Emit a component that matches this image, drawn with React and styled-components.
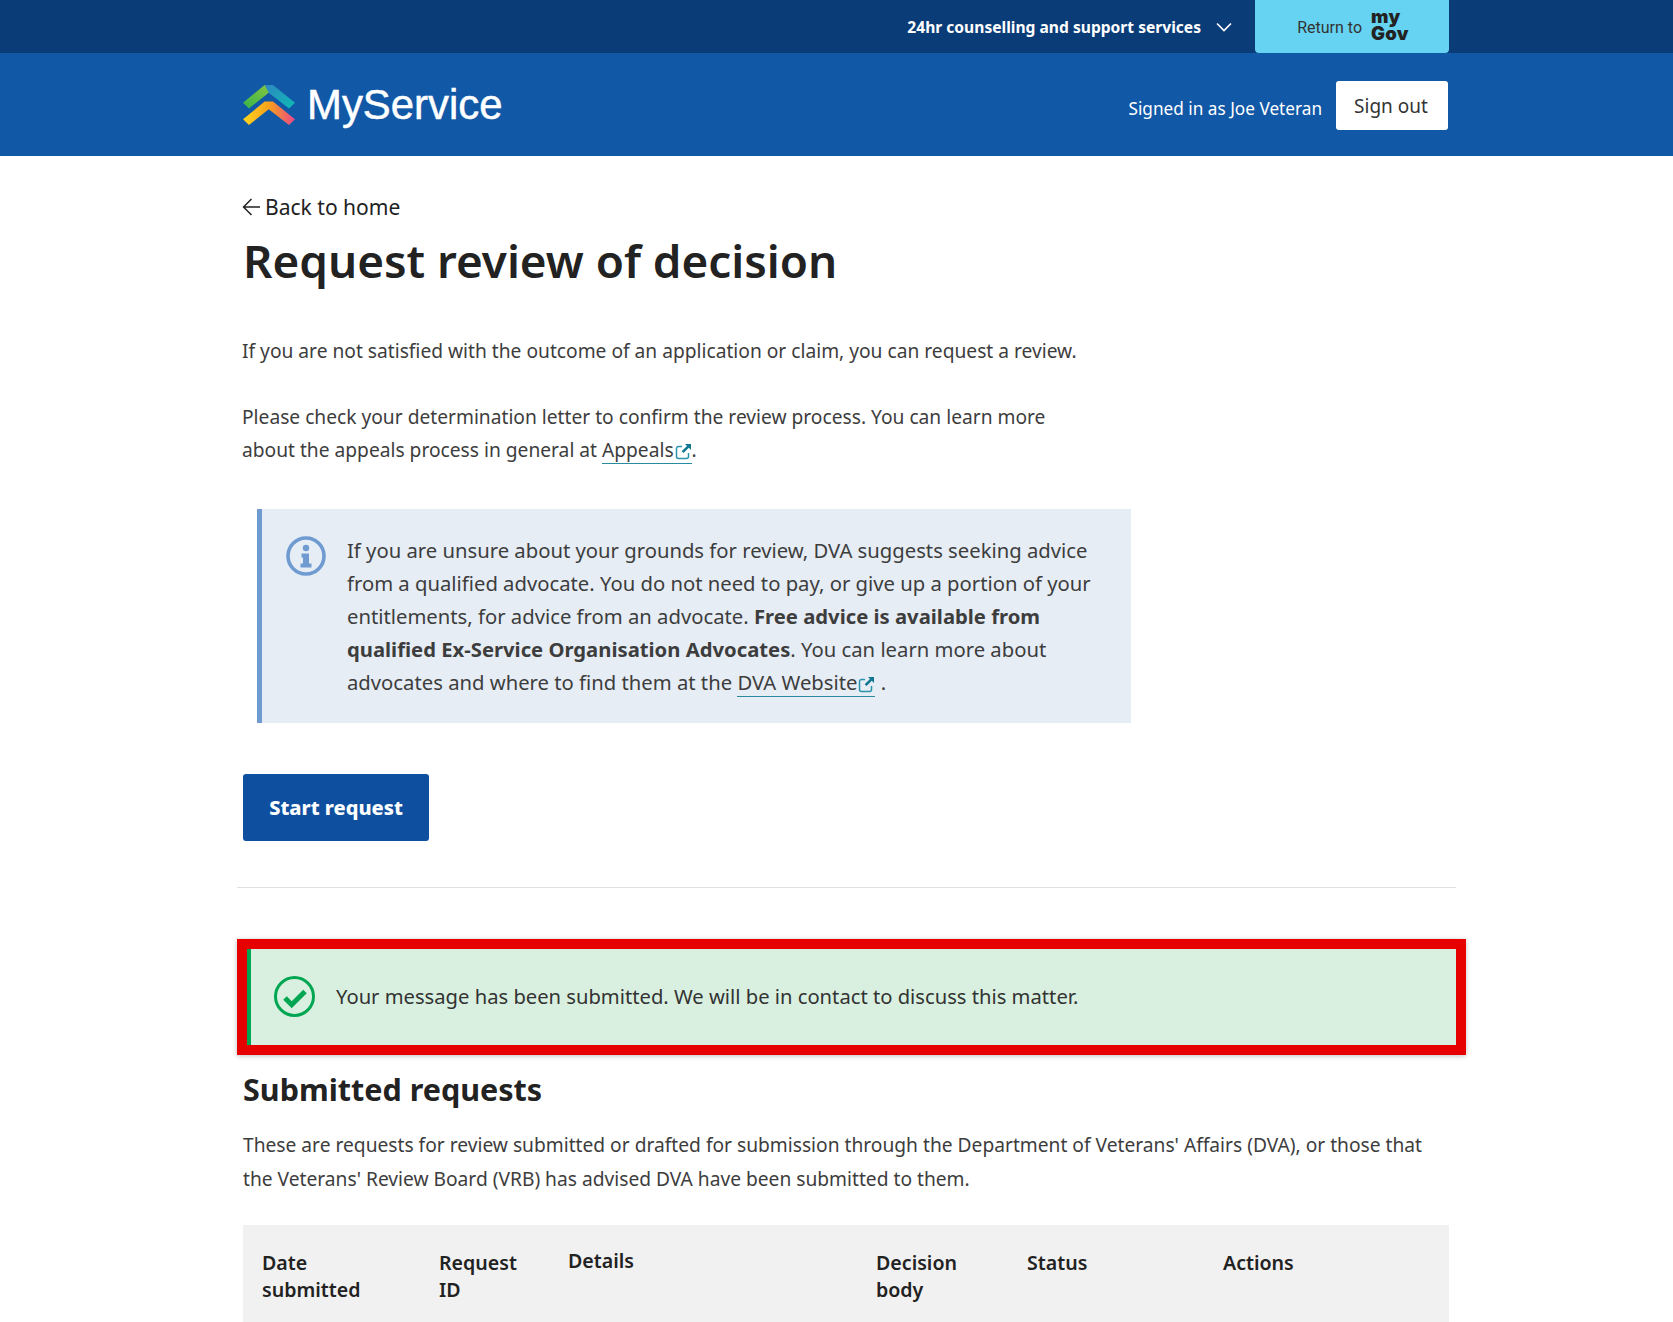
import React from 'react'
import styled, { createGlobalStyle } from 'styled-components'

const GlobalStyle = createGlobalStyle`
    html, body {
        margin: 0;
        padding: 0;
        background: #fff;
        overflow: hidden;
    }
    body {
        font-family: "Noto Sans", "Open Sans", sans-serif;
        color: #3d3d3d;
    }
`

const Inner = styled.div`
    width: 1206px;
    margin-left: 243px;
`

const TopBar = styled.div`
    height: 53px;
    background: #0a3c78;
`

const TopInner = styled(Inner)`
    height: 100%;
    display: flex;
    justify-content: flex-end;
    align-items: center;
`

const SupportLink = styled.a`
    display: flex;
    align-items: center;
    gap: 15px;
    margin-right: 23px;
    color: #fff;
    font-size: 15.6px;
    font-weight: 700;
`

const ReturnButton = styled.a`
    width: 194px;
    height: 53px;
    box-sizing: border-box;
    padding: 1px 0 0 2px;
    background: #65d3f1;
    border-radius: 0 0 4px 4px;
    display: flex;
    align-items: center;
    justify-content: center;
    gap: 9px;
    color: #333;
    font-family: Roboto, sans-serif;
    font-size: 16px;
`

const GovMark = styled.span`
    display: flex;
    flex-direction: column;
    margin-bottom: 4px;
    line-height: 17px;
    font-family: Inter, sans-serif;
    font-size: 18.5px;
    font-weight: 900;
    letter-spacing: 0.3px;
    color: #222;
`

const Header = styled.header`
    height: 103px;
    background: #1158a7;
`

const HeaderInner = styled(Inner)`
    height: 100%;
    display: flex;
    align-items: center;
    justify-content: space-between;
    color: #fff;
`

const Brand = styled.div`
    display: flex;
    align-items: center;
    gap: 12px;
    font-family: "Liberation Sans", Arial, sans-serif;
    font-size: 41.9px;
    -webkit-text-stroke: 0.5px #fff;
    color: #fff;
`

const UserArea = styled.div`
    display: flex;
    align-items: center;
    gap: 14px;
    margin: 1px 1px 0 0;
`

const SignedIn = styled.span`
    font-size: 17.2px;
    margin-top: 7px;
`

const SignOut = styled.button`
    width: 112px;
    height: 49px;
    padding: 2px 2px 0 0;
    border: none;
    border-radius: 3px;
    background: #fff;
    color: #333;
    font-family: "Noto Sans", sans-serif;
    font-size: 19px;
`

const Main = styled(Inner)`
    padding-top: 36px;
`

const BackLink = styled.a`
    display: flex;
    align-items: center;
    gap: 5px;
    margin-left: -1px;
    color: #222;
    font-size: 21.05px;
    line-height: 30px;
`

const Title = styled.h1`
    margin: 7px 0 43px;
    font-size: 45.8px;
    line-height: 62px;
    font-weight: 600;
    color: #222;
`

const Text = styled.p`
    margin: 0 0 33px -1px;
    max-width: 860px;
    font-size: 19.2px;
    line-height: 33px;
`

const DocLink = styled.a`
    border-bottom: 1px solid #2a8aa0;
    color: #3d3d3d;
    svg {
        margin-left: 1px;
        vertical-align: -3px;
    }
`

const Callout = styled.div`
    width: 874px;
    box-sizing: border-box;
    margin: 43px 0 51px 14px;
    padding: 25px 30px 24px 24px;
    display: flex;
    gap: 21px;
    background: #e6edf5;
    border-left: 5px solid #6f9bd1;
    font-size: 20.25px;
    line-height: 33px;
    > svg {
        flex: none;
        margin-top: 2px;
    }
`

const StartButton = styled.button`
    display: block;
    width: 186px;
    height: 67px;
    border: none;
    border-radius: 3px;
    background: #0f4fa0;
    color: #fff;
    font-family: "Noto Sans", sans-serif;
    font-size: 20px;
    font-weight: 800;
`

const Rule = styled.hr`
    margin: 46px 0 51px -6px;
    width: 1219px;
    border: none;
    border-top: 1px solid #e0e0e0;
`

const Alert = styled.div`
    width: 1229px;
    height: 116px;
    box-sizing: border-box;
    margin-left: -6px;
    display: flex;
    align-items: center;
    gap: 21px;
    padding: 0 0 2px 27px;
    border: 10px solid #e60000;
    background: linear-gradient(to right, #00a651 4px, #d9f0e0 4px);
    box-shadow: 0 1px 5px rgba(0, 0, 0, 0.25);
    font-size: 20.2px;
    color: #333;
`

const SectionTitle = styled.h2`
    margin: 15px 0 20px;
    font-size: 30.5px;
    line-height: 38px;
    font-weight: 700;
    color: #222;
`

const Intro = styled.p`
    margin: 0 0 29px;
    font-size: 19.2px;
    line-height: 34px;
`

const Table = styled.table`
    width: 100%;
    table-layout: fixed;
    border-collapse: collapse;
`

const HeadCell = styled.th`
    box-sizing: border-box;
    width: ${p => p.$w ? p.$w + 'px' : 'auto'};
    padding: ${p => p.$raised ? '22px' : '24px'} 19px 19px;
    background: #f1f1f1;
    vertical-align: top;
    text-align: left;
    color: #222;
    font-size: 19.6px;
    line-height: 27px;
    font-weight: 600;
`

function Logo() {
    return (
        <svg width="52" height="40" viewBox="0 0 52 40">
            <defs>
                <linearGradient id="topLeft" x1="0" x2="1" y1="1" y2="0">
                    <stop offset="0" stopColor="#35b44a" />
                    <stop offset="1" stopColor="#8cc63f" />
                </linearGradient>
                <linearGradient id="topRight" x1="0" x2="1" y1="0" y2="1">
                    <stop offset="0" stopColor="#2f86c1" />
                    <stop offset="1" stopColor="#0cbcb4" />
                </linearGradient>
                <linearGradient id="lowArrow" x1="0" x2="1" y1="0" y2="0">
                    <stop offset="0" stopColor="#ffd51f" />
                    <stop offset="0.5" stopColor="#f9a11b" />
                    <stop offset="1" stopColor="#e8458a" />
                </linearGradient>
            </defs>
            <path d="M0 17.7L21.7 0H30L25.7 7.7L6 23.4Z" fill="url(#topLeft)" />
            <path d="M21.7 0H30L52 17.7L46 23.4L25.7 7.7Z" fill="url(#topRight)" />
            <path d="M0 34.3L21.7 16.6H30L52 34.3L46 40L25.7 24.3L6 40Z" fill="url(#lowArrow)" />
        </svg>
    )
}

function InfoIcon() {
    return (
        <svg width="40" height="40" viewBox="0 0 40 40">
            <circle cx="20" cy="20" r="18" fill="none" stroke="#6f9bd1" strokeWidth="3.6" />
            <circle cx="20" cy="12" r="3.2" fill="#6f9bd1" />
            <path d="M15.5 17.5h7.5v10h2.5v4H14.5v-4H17v-6h-1.5z" fill="#6f9bd1" />
        </svg>
    )
}

function CheckIcon() {
    return (
        <svg width="41" height="41" viewBox="0 0 41 41">
            <circle cx="20.5" cy="20.5" r="19" fill="none" stroke="#00a651" strokeWidth="3" />
            <path d="M11 22l6.700 6.700L31 15.500" fill="none" stroke="#00a651" strokeWidth="5" />
        </svg>
    )
}

function Chevron() {
    return (
        <svg width="16" height="10" viewBox="0 0 16 10">
            <path d="M1 1.500l7 7 7-7" fill="none" stroke="#fff" strokeWidth="1.600" />
        </svg>
    )
}

function BackArrow() {
    return (
        <svg width="18" height="18" viewBox="0 0 18 18">
            <path d="M9.500 1L1.500 9l8 8M1.500 9H18" fill="none" stroke="#222" strokeWidth="1.500" />
        </svg>
    )
}

function LinkIcon() {
    return (
        <svg width="17" height="17" viewBox="0 0 17 17">
            <path d="M13.500 10v3.500a2 2 0 0 1-2 2h-8a2 2 0 0 1-2-2v-8a2 2 0 0 1 2-2H7" fill="none" stroke="#2a94ad" strokeWidth="1.500" />
            <path d="M10 1h6v6l-2.200-2.200-5.300 5.300-1.800-1.800 5.300-5.300z" fill="#12788f" />
        </svg>
    )
}

export default function App() {
    return (
        <>
            <GlobalStyle />
            <TopBar>
                <TopInner>
                    <SupportLink>
                        24hr counselling and support services
                        <Chevron />
                    </SupportLink>
                    <ReturnButton>
                        Return to
                        <GovMark><span>my</span><span>Gov</span></GovMark>
                    </ReturnButton>
                </TopInner>
            </TopBar>
            <Header>
                <HeaderInner>
                    <Brand><Logo />MyService</Brand>
                    <UserArea>
                        <SignedIn>Signed in as Joe Veteran</SignedIn>
                        <SignOut>Sign out</SignOut>
                    </UserArea>
                </HeaderInner>
            </Header>
            <Main>
                <BackLink><BackArrow />Back to home</BackLink>
                <Title>Request review of decision</Title>
                <Text>If you are not satisfied with the outcome of an application or claim, you can request a review.</Text>
                <Text>
                    Please check your determination letter to confirm the review process. You can learn more about the appeals process in general at <DocLink>Appeals<LinkIcon /></DocLink>.
                </Text>
                <Callout>
                    <InfoIcon />
                    <div>
                        If you are unsure about your grounds for review, DVA suggests seeking advice from a qualified advocate. You do not need to pay, or give up a portion of your entitlements, for advice from an advocate. <b>Free advice is available from qualified Ex-Service Organisation Advocates</b>. You can learn more about advocates and where to find them at the <DocLink>DVA Website<LinkIcon /></DocLink> .
                    </div>
                </Callout>
                <StartButton>Start request</StartButton>
                <Rule />
                <Alert>
                    <CheckIcon />
                    Your message has been submitted. We will be in contact to discuss this matter.
                </Alert>
                <SectionTitle>Submitted requests</SectionTitle>
                <Intro>
                    These are requests for review submitted or drafted for submission through the Department of Veterans' Affairs (DVA), or those that the Veterans' Review Board (VRB) has advised DVA have been submitted to them.
                </Intro>
                <Table>
                    <thead>
                        <tr>
                            <HeadCell $w={177}>Date submitted</HeadCell>
                            <HeadCell $w={129}>Request ID</HeadCell>
                            <HeadCell $w={308} $raised>Details</HeadCell>
                            <HeadCell $w={151}>Decision body</HeadCell>
                            <HeadCell $w={196}>Status</HeadCell>
                            <HeadCell>Actions</HeadCell>
                        </tr>
                    </thead>
                </Table>
            </Main>
        </>
    )
}
